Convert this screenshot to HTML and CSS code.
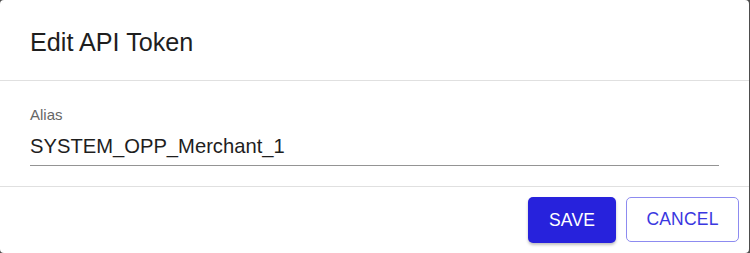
FILE: index.html
```html
<!DOCTYPE html>
<html>
<head>
<meta charset="utf-8">
<link rel="stylesheet" href="styles.css">
</head>
<body>
<div class="dialog">
  <div class="dialog-title">Edit API Token</div>
  <div class="dialog-content">
    <div class="field">
      <label class="field-label">Alias</label>
      <div class="field-input">SYSTEM_OPP_Merchant_1</div>
    </div>
  </div>
  <div class="dialog-actions">
    <button class="btn btn-primary">SAVE</button>
    <button class="btn btn-outline">CANCEL</button>
  </div>
</div>
</body>
</html>
```

FILE: styles.css
```css
html, body {
  margin: 0;
  padding: 0;
}
body {
  background: #4d4d4d;
  font-family: "Liberation Sans", Arial, sans-serif;
  width: 750px;
  height: 253px;
  overflow: hidden;
}
.dialog {
  width: 749px;
  height: 253px;
  background: #fff;
  border-radius: 4px;
  display: flex;
  flex-direction: column;
  box-sizing: border-box;
}
.dialog-title {
  padding: 22px 30px 18px;
  font-size: 25.2px;
  line-height: 40px;
  color: #1e1e1e;
}
.dialog-content {
  border-top: 1px solid #e0e0e0;
  border-bottom: 1px solid #e0e0e0;
  padding: 25px 30px 20px;
}
.field {
  display: flex;
  flex-direction: column;
  gap: 10px;
}
.field-label {
  font-size: 15px;
  line-height: 18px;
  color: #666;
}
.field-input {
  font-size: 20.2px;
  line-height: 24px;
  color: #1e1e1e;
  padding-bottom: 7px;
  border-bottom: 1px solid #949494;
}
.dialog-actions {
  flex: 1;
  display: flex;
  justify-content: flex-end;
  align-items: flex-start;
  gap: 10px;
  padding: 10px 10px 0;
}
.btn {
  font-family: "Liberation Sans", Arial, sans-serif;
  font-size: 17.5px;
  height: 46px;
  border-radius: 5px;
  cursor: pointer;
  letter-spacing: 0.2px;
}
.btn-primary {
  background: #2722dc;
  color: #fff;
  border: none;
  padding: 0 21px;
  width: 88px;
  box-shadow: 0 2px 3px rgba(0,0,0,0.25);
}
.btn-outline {
  background: #fff;
  color: #3a37e0;
  border: 1px solid #8d8bf0;
  width: 113px;
  height: 45px;
  padding: 0 19px;
}
```
